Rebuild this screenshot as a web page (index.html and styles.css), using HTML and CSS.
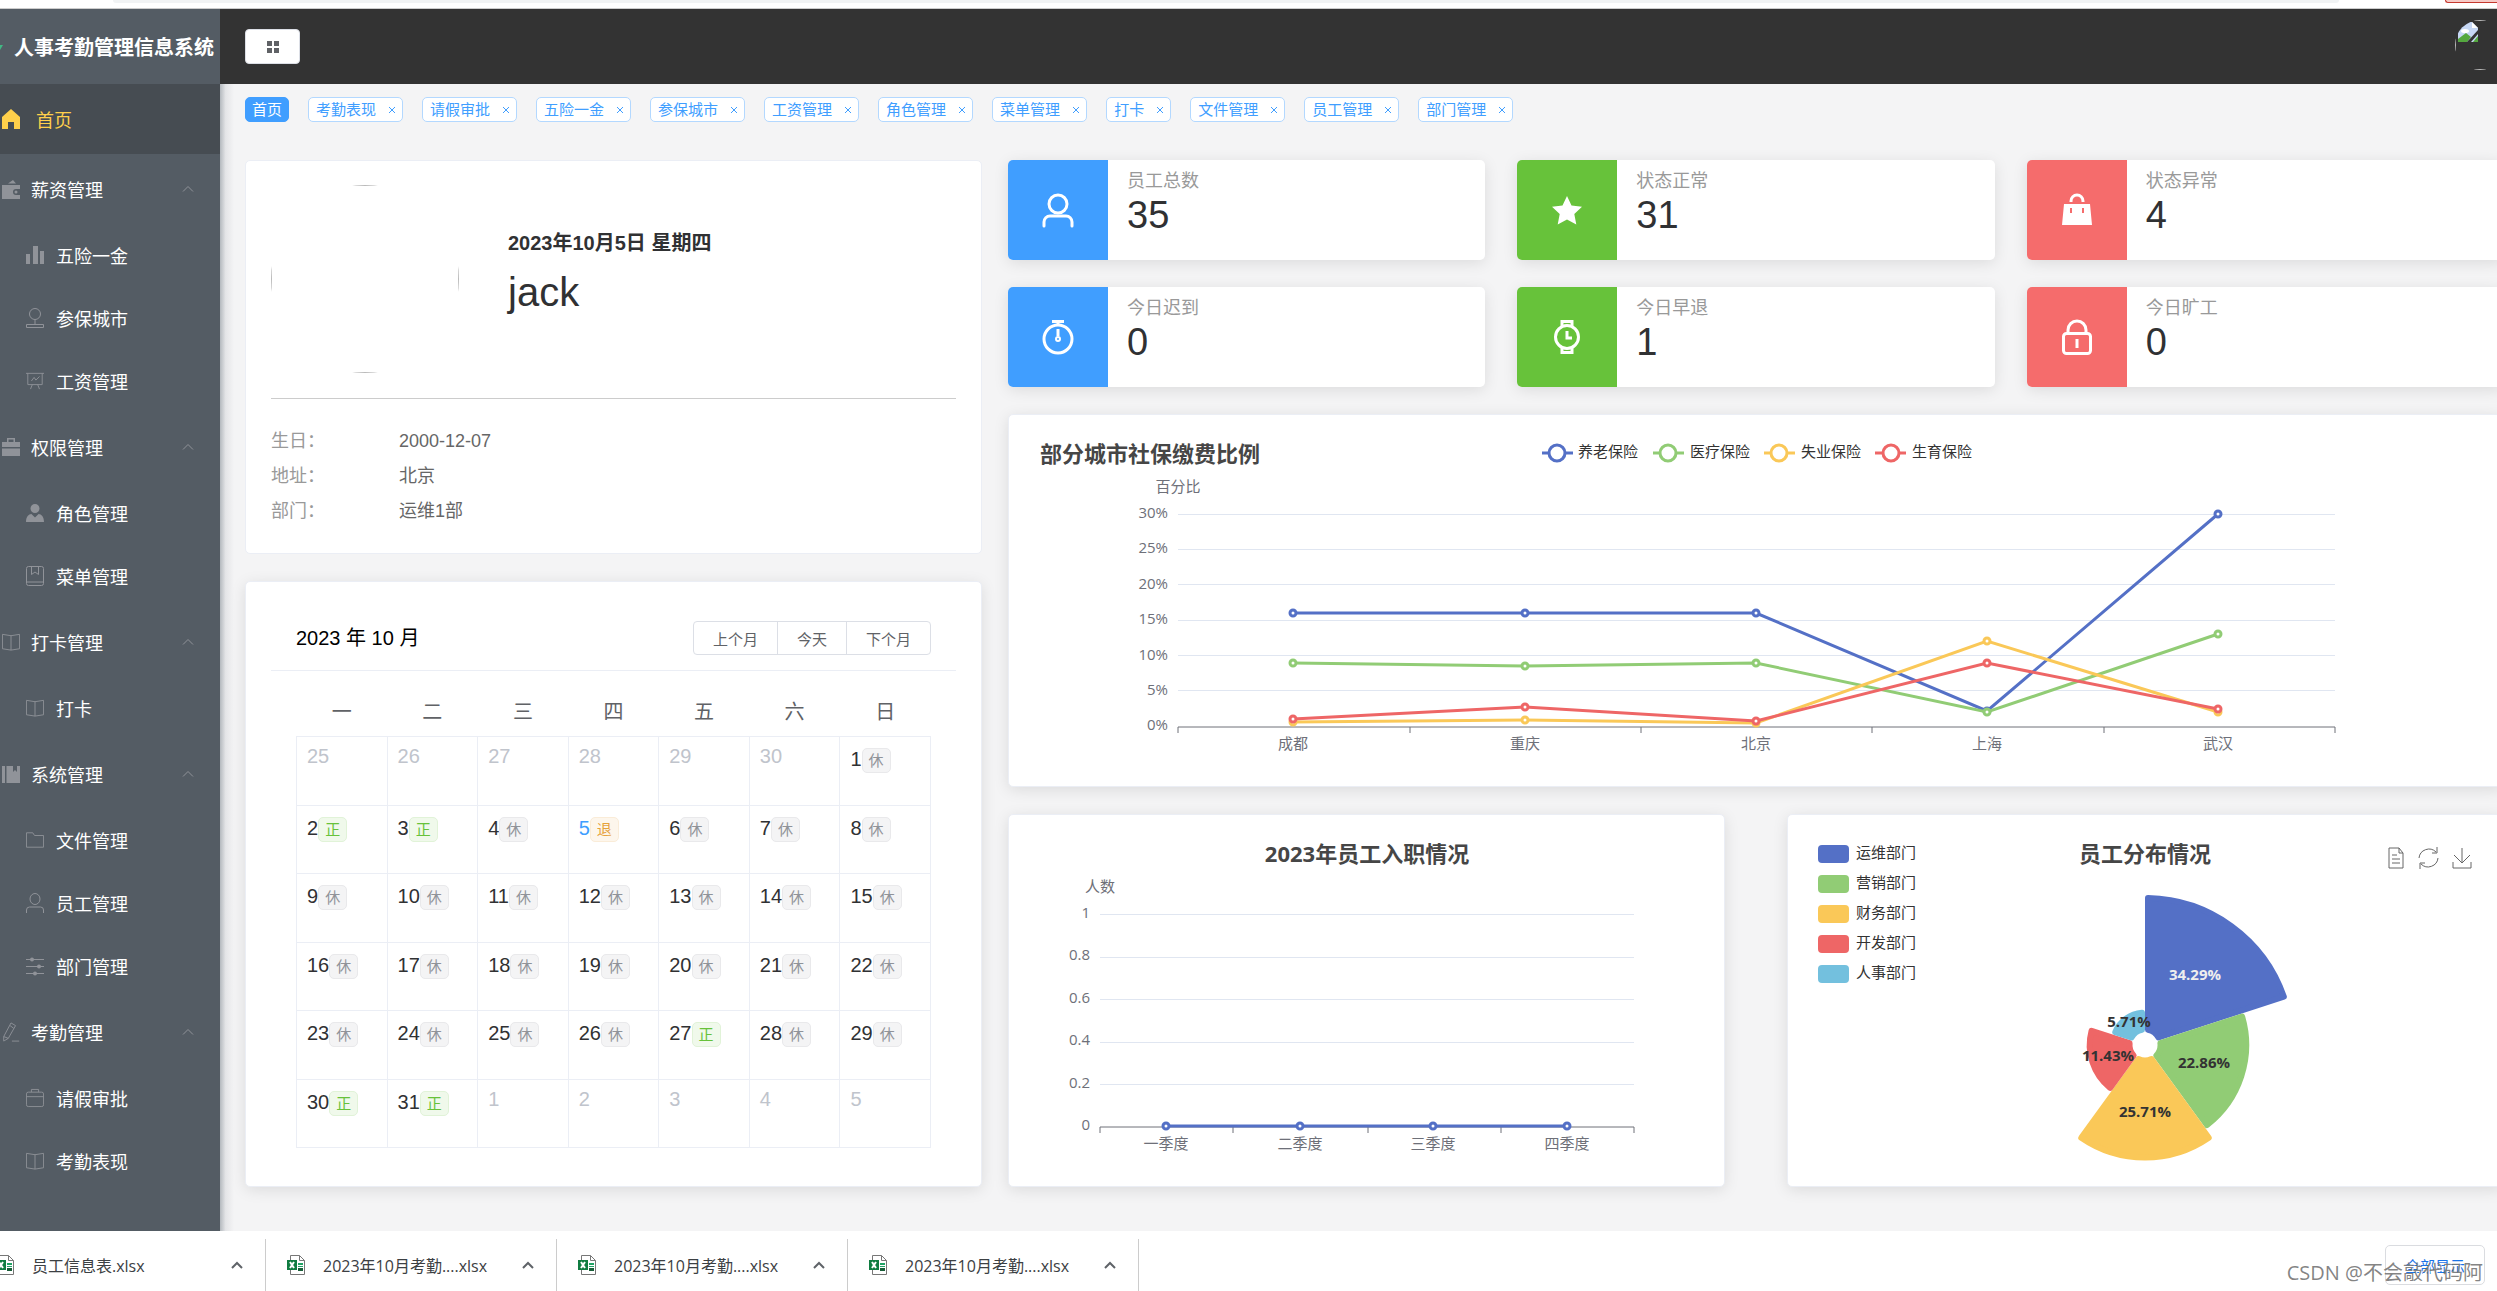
FILE: index.html
```html
<!DOCTYPE html>
<html lang="zh-CN">
<head>
<meta charset="utf-8">
<title>人事考勤管理信息系统</title>
<link rel="stylesheet" href="styles.css">
</head>
<body>
<svg class="sprite" aria-hidden="true">
  <symbol id="i-home" viewBox="0 0 18 20"><path fill="currentColor" d="M9 0 18 8v12h-6v-7H6v7H0V8z"/></symbol>
  <symbol id="i-wallet" viewBox="0 0 18 20"><path fill="currentColor" d="M6 4.500 11 1l3 3.500zM0 6h18v4h-4a3 3 0 0 0 0 6h4v4H0z"/><circle cx="14" cy="13" r="1.500" fill="currentColor"/></symbol>
  <symbol id="i-bars" viewBox="0 0 18 20"><path fill="currentColor" d="M0 9h4v10H0zM7 1h5v18H7zM14 6h4v13h-4z"/></symbol>
  <symbol id="i-place" viewBox="0 0 18 20"><g fill="none" stroke="currentColor"><circle cx="9" cy="6" r="5.500"/><path d="M9 11.500v5M.5 19.500v-3h17v3z"/></g></symbol>
  <symbol id="i-board" viewBox="0 0 20 20"><g fill="none" stroke="currentColor"><path d="M0 1.500h20M2 1.500v12.500h16V1.500M7 14l-2 5M13 14l2 5M6 10l3-4 2 3 4-4"/></g></symbol>
  <symbol id="i-case" viewBox="0 0 18 20"><path fill="currentColor" fill-rule="evenodd" d="M5 1h8v4h5v5H0V5h5zM6.500 2.500V5h5V2.500zM0 11.500h18V19H0z"/></symbol>
  <symbol id="i-user-solid" viewBox="0 0 20 20"><path fill="currentColor" d="M10 0a5 5 0 0 1 0 10 5 5 0 0 1 0-10M0 20c0-6 3-9 6-9l4 4 4-4c3 0 6 3 6 9z"/></symbol>
  <symbol id="i-note" viewBox="0 0 18 20"><g fill="none" stroke="currentColor"><rect x=".5" y=".5" width="17" height="19" rx="2"/><path d="M5.500.5v8L9 6l3.500 2.500v-8M.5 16h17"/></g></symbol>
  <symbol id="i-book" viewBox="0 0 20 20"><path fill="none" stroke="currentColor" d="M.5 1.500 10 3l9.500-1.500v16L10 19 .5 17.500zM10 3v16"/></symbol>
  <symbol id="i-manage" viewBox="0 0 18 20"><path fill="currentColor" d="M0 2h3v17H0zM4.500 2H11v6l2-2 2 2V2h3v17H4.500z"/></symbol>
  <symbol id="i-folder" viewBox="0 0 20 20"><path fill="none" stroke="currentColor" d="M.5 2h7l2 3h10v13H.5z"/></symbol>
  <symbol id="i-user" viewBox="0 0 18 20"><g fill="none" stroke="currentColor"><ellipse cx="9" cy="6" rx="5" ry="5.500"/><path d="M.5 20v-3a3 3 0 0 1 3-3h11a3 3 0 0 1 3 3v3"/></g></symbol>
  <symbol id="i-sliders" viewBox="0 0 18 20"><path fill="none" stroke="currentColor" d="M0 3.500h18M0 10.500h18M0 17.500h18"/><g fill="currentColor"><circle cx="6" cy="3.500" r="2"/><circle cx="13" cy="10.500" r="2"/><circle cx="9" cy="17.500" r="2"/></g></symbol>
  <symbol id="i-edit" viewBox="0 0 18 22"><g fill="none" stroke="currentColor"><path d="M1 16 9 1l5 3-8 14-5 3zM8 4l4 3M1 16l5 2M10 21h8"/></g></symbol>
  <symbol id="i-bag" viewBox="0 0 20 20"><g fill="none" stroke="currentColor"><rect x=".5" y="3.500" width="19" height="16" rx="2"/><path d="M.5 8.500h19M6 3.500v-3h8v3"/></g></symbol>
  <symbol id="i-up" viewBox="0 0 12 8"><path fill="none" stroke="currentColor" d="M1 6.500 6 1.500l5 5"/></symbol>
  <symbol id="i-chev" viewBox="0 0 12 8"><path fill="none" stroke="currentColor" stroke-width="2" d="M1 7l5-5 5 5"/></symbol>
  <symbol id="i-x" viewBox="0 0 8 8"><path fill="none" stroke="currentColor" d="M1 1l6 6M7 1 1 7"/></symbol>
  <symbol id="i-xls" viewBox="0 0 18 20"><path fill="#fff" stroke="#777" d="M3.500.5h9l5 5v14h-14z"/><path fill="none" stroke="#777" d="M12.500.5v5h5"/><path fill="#21a366" d="M11 8h5v2h-5zM11 11h5v1h-5z"/><path fill="#185c37" d="M11 13h5v3h-5z"/><path fill="#107c41" d="M0 5h10v10H0z"/><path stroke="#fff" stroke-width="2" d="M3 7l4 6M7 7l-4 6"/></symbol>
</svg>

<div class="page">
  <div class="browser-top"><div class="address"></div><div class="update"></div></div>
  <div class="app">
    <aside class="sidebar">
      <div class="brand"><svg viewBox="0 0 4 8" aria-hidden="true"><path fill="#41b883" d="M0 2h3L0 7z"/></svg><h1>人事考勤管理信息系统</h1></div>
      <nav>
        <a class="home" href="#"><svg><use href="#i-home"/></svg>首页</a>
        <section>
          <button class="group"><svg><use href="#i-wallet"/></svg>薪资管理<svg class="arrow"><use href="#i-up"/></svg></button>
          <div class="items">
            <a href="#"><svg><use href="#i-bars"/></svg>五险一金</a>
            <a href="#"><svg><use href="#i-place"/></svg>参保城市</a>
            <a href="#"><svg><use href="#i-board"/></svg>工资管理</a>
          </div>
        </section>
        <section>
          <button class="group"><svg><use href="#i-case"/></svg>权限管理<svg class="arrow"><use href="#i-up"/></svg></button>
          <div class="items">
            <a href="#"><svg><use href="#i-user-solid"/></svg>角色管理</a>
            <a href="#"><svg><use href="#i-note"/></svg>菜单管理</a>
          </div>
        </section>
        <section>
          <button class="group"><svg><use href="#i-book"/></svg>打卡管理<svg class="arrow"><use href="#i-up"/></svg></button>
          <div class="items">
            <a href="#"><svg><use href="#i-book"/></svg>打卡</a>
          </div>
        </section>
        <section>
          <button class="group"><svg><use href="#i-manage"/></svg>系统管理<svg class="arrow"><use href="#i-up"/></svg></button>
          <div class="items">
            <a href="#"><svg><use href="#i-folder"/></svg>文件管理</a>
            <a href="#"><svg><use href="#i-user"/></svg>员工管理</a>
            <a href="#"><svg><use href="#i-sliders"/></svg>部门管理</a>
          </div>
        </section>
        <section>
          <button class="group"><svg><use href="#i-edit"/></svg>考勤管理<svg class="arrow"><use href="#i-up"/></svg></button>
          <div class="items">
            <a href="#"><svg><use href="#i-bag"/></svg>请假审批</a>
            <a href="#"><svg><use href="#i-book"/></svg>考勤表现</a>
          </div>
        </section>
      </nav>
    </aside>

    <div class="main">
      <header class="topbar">
        <button class="toggle" aria-label="折叠菜单"><svg viewBox="0 0 12 12"><path fill="#606266" d="M0 0h5v5H0zM7 0h5v5H7zM0 7h5v5H0zM7 7h5v5H7z"/></svg></button>
        <div class="avatar small"><svg viewBox="0 0 20 20"><path fill="#c6d7f5" d="M0 0h14l6 6v14H0z"/><path fill="#fff" d="M14 0v6h6z"/><ellipse cx="7" cy="9" rx="4" ry="2" fill="#fff"/><path fill="#54a83e" d="M0 20v-3l8-6 5 4-4 5z"/><path fill="#54a83e" d="M15 20l5-6v6z"/><path fill="#333" d="M9 20 20 8v4l-7 8z"/></svg></div>
      </header>

      <div class="tags">
        <span class="tag active"><a href="#">首页</a></span>
        <span class="tag"><a href="#">考勤表现</a><button aria-label="关闭"><svg><use href="#i-x"/></svg></button></span>
        <span class="tag"><a href="#">请假审批</a><button aria-label="关闭"><svg><use href="#i-x"/></svg></button></span>
        <span class="tag"><a href="#">五险一金</a><button aria-label="关闭"><svg><use href="#i-x"/></svg></button></span>
        <span class="tag"><a href="#">参保城市</a><button aria-label="关闭"><svg><use href="#i-x"/></svg></button></span>
        <span class="tag"><a href="#">工资管理</a><button aria-label="关闭"><svg><use href="#i-x"/></svg></button></span>
        <span class="tag"><a href="#">角色管理</a><button aria-label="关闭"><svg><use href="#i-x"/></svg></button></span>
        <span class="tag"><a href="#">菜单管理</a><button aria-label="关闭"><svg><use href="#i-x"/></svg></button></span>
        <span class="tag"><a href="#">打卡</a><button aria-label="关闭"><svg><use href="#i-x"/></svg></button></span>
        <span class="tag"><a href="#">文件管理</a><button aria-label="关闭"><svg><use href="#i-x"/></svg></button></span>
        <span class="tag"><a href="#">员工管理</a><button aria-label="关闭"><svg><use href="#i-x"/></svg></button></span>
        <span class="tag"><a href="#">部门管理</a><button aria-label="关闭"><svg><use href="#i-x"/></svg></button></span>
      </div>

      <div class="dashboard">
        <div class="column">
          <section class="card flat profile">
            <div class="who">
              <div class="avatar"></div>
              <div class="greeting">
                <p class="date">2023年10月5日 星期四</p>
                <p class="name">jack</p>
              </div>
            </div>
            <dl>
              <dt>生日：</dt><dd>2000-12-07</dd>
              <dt>地址：</dt><dd>北京</dd>
              <dt>部门：</dt><dd>运维1部</dd>
            </dl>
          </section>

          <section class="card calendar">
            <header>
              <h2>2023 年 10 月</h2>
              <div class="buttons"><button>上个月</button><button>今天</button><button>下个月</button></div>
            </header>
            <table>
              <thead><tr><th>一</th><th>二</th><th>三</th><th>四</th><th>五</th><th>六</th><th>日</th></tr></thead>
              <tbody>
                <tr><td class="out">25</td><td class="out">26</td><td class="out">27</td><td class="out">28</td><td class="out">29</td><td class="out">30</td><td>1<i>休</i></td></tr>
                <tr><td>2<i class="ok">正</i></td><td>3<i class="ok">正</i></td><td>4<i>休</i></td><td class="today">5<i class="warn">退</i></td><td>6<i>休</i></td><td>7<i>休</i></td><td>8<i>休</i></td></tr>
                <tr><td>9<i>休</i></td><td>10<i>休</i></td><td>11<i>休</i></td><td>12<i>休</i></td><td>13<i>休</i></td><td>14<i>休</i></td><td>15<i>休</i></td></tr>
                <tr><td>16<i>休</i></td><td>17<i>休</i></td><td>18<i>休</i></td><td>19<i>休</i></td><td>20<i>休</i></td><td>21<i>休</i></td><td>22<i>休</i></td></tr>
                <tr><td>23<i>休</i></td><td>24<i>休</i></td><td>25<i>休</i></td><td>26<i>休</i></td><td>27<i class="ok">正</i></td><td>28<i>休</i></td><td>29<i>休</i></td></tr>
                <tr><td>30<i class="ok">正</i></td><td>31<i class="ok">正</i></td><td class="out">1</td><td class="out">2</td><td class="out">3</td><td class="out">4</td><td class="out">5</td></tr>
              </tbody>
            </table>
          </section>
        </div>

        <div class="column">
          <div class="stats">
            <div class="card stat blue"><div class="icon"><svg viewBox="0 0 32 36"><g fill="none" stroke="#fff" stroke-width="3"><circle cx="16" cy="12" r="9"/><path stroke-linecap="round" d="M2 34v-4a6 6 0 0 1 6-6h16a6 6 0 0 1 6 6v4"/></g></svg></div><div><p>员工总数</p><strong>35</strong></div></div>
            <div class="card stat green"><div class="icon"><svg viewBox="0 0 32 36"><path fill="#fff" d="M16 4l4.500 9.500 10.500 1.200-7.700 7.200 2 10.600L16 27.500l-9.300 5 2-10.600L1 14.700l10.500-1.200z"/></svg></div><div><p>状态正常</p><strong>31</strong></div></div>
            <div class="card stat red"><div class="icon"><svg viewBox="0 0 32 36"><path fill="none" stroke="#fff" stroke-width="3" d="M10 10V9a6 6 0 0 1 12 0v1"/><path fill="#fff" fill-rule="evenodd" d="M3 12h26l2 21H1zM9 16v5h2v-5zM21 16v5h2v-5z"/></svg></div><div><p>状态异常</p><strong>4</strong></div></div>
            <div class="card stat blue"><div class="icon"><svg viewBox="0 0 32 36"><g fill="none" stroke="#fff" stroke-width="3"><circle cx="16" cy="20" r="14"/><path d="M16 6V3M10 2.500h12M16 10v7"/><circle cx="16" cy="20" r="2" stroke-width="2"/></g></svg></div><div><p>今日迟到</p><strong>0</strong></div></div>
            <div class="card stat green"><div class="icon"><svg viewBox="0 0 32 36"><g fill="none" stroke="#fff" stroke-width="3"><circle cx="16" cy="18" r="11.500"/><path d="M11 7V2.500h10V7M11 29v4.500h10V29M16 12v7h5"/></g></svg></div><div><p>今日早退</p><strong>1</strong></div></div>
            <div class="card stat red"><div class="icon"><svg viewBox="0 0 32 36"><g fill="none" stroke="#fff" stroke-width="3"><rect x="2.500" y="14.500" width="27" height="20" rx="3"/><path d="M7 14v-3a9 9 0 0 1 18 0v3M16 20v9"/></g></svg></div><div><p>今日旷工</p><strong>0</strong></div></div>
          </div>

          <section class="card chart">
            <svg viewBox="1 1 1494 371" role="img" aria-label="部分城市社保缴费比例">
              <text class="title" x="32" y="48">部分城市社保缴费比例</text>
              <g class="legend">
                <g stroke="#5470c6"><path d="M534 39h31"/><circle cx="549" cy="39" r="8"/></g><text x="570" y="43">养老保险</text>
                <g stroke="#91cc75"><path d="M645 39h31"/><circle cx="660" cy="39" r="8"/></g><text x="682" y="43">医疗保险</text>
                <g stroke="#fac858"><path d="M756 39h31"/><circle cx="771" cy="39" r="8"/></g><text x="793" y="43">失业保险</text>
                <g stroke="#ee6666"><path d="M867 39h31"/><circle cx="883" cy="39" r="8"/></g><text x="904" y="43">生育保险</text>
              </g>
              <path class="grid" d="M170 100.500h1157M170 135.500h1157M170 170.500h1157M170 206.500h1157M170 241.500h1157M170 276.500h1157"/>
              <path class="axis" d="M170 313h1157M170 313v6M402 313v6M633 313v6M864 313v6M1096 313v6M1327 313v6"/>
              <g class="labels end">
                <text x="160" y="104">30%</text><text x="160" y="139">25%</text><text x="160" y="175">20%</text><text x="160" y="210">15%</text><text x="160" y="246">10%</text><text x="160" y="281">5%</text><text x="160" y="316">0%</text>
              </g>
              <g class="labels mid">
                <text x="170" y="78">百分比</text>
                <text x="285" y="335">成都</text><text x="517" y="335">重庆</text><text x="748" y="335">北京</text><text x="979" y="335">上海</text><text x="1210" y="335">武汉</text>
              </g>
              <g class="series" stroke="#5470c6"><path d="M285 199H748L979 297 1210 100"/><circle cx="285" cy="199" r="3"/><circle cx="517" cy="199" r="3"/><circle cx="748" cy="199" r="3"/><circle cx="979" cy="297" r="3"/><circle cx="1210" cy="100" r="3"/></g>
              <g class="series" stroke="#91cc75"><path d="M285 249 517 252 748 249 979 298 1210 220"/><circle cx="285" cy="249" r="3"/><circle cx="517" cy="252" r="3"/><circle cx="748" cy="249" r="3"/><circle cx="979" cy="298" r="3"/><circle cx="1210" cy="220" r="3"/></g>
              <g class="series" stroke="#fac858"><path d="M285 308 517 306 748 309 979 227 1210 298"/><circle cx="285" cy="308" r="3"/><circle cx="517" cy="306" r="3"/><circle cx="748" cy="309" r="3"/><circle cx="979" cy="227" r="3"/><circle cx="1210" cy="298" r="3"/></g>
              <g class="series" stroke="#ee6666"><path d="M285 305 517 293 748 307 979 249 1210 295"/><circle cx="285" cy="305" r="3"/><circle cx="517" cy="293" r="3"/><circle cx="748" cy="307" r="3"/><circle cx="979" cy="249" r="3"/><circle cx="1210" cy="295" r="3"/></g>
            </svg>
          </section>

          <div class="pair">
            <section class="card chart">
              <svg viewBox="1 1 715 371" role="img" aria-label="2023年员工入职情况">
                <text class="title mid" x="359" y="48">2023年员工入职情况</text>
                <path class="grid" d="M92 100.500h534M92 143.500h534M92 185.500h534M92 228.500h534M92 270.500h534"/>
                <path class="axis" d="M92 313h534M92 313v6M225 313v6M360 313v6M493 313v6M626 313v6"/>
                <g class="labels end">
                  <text x="82" y="104">1</text><text x="82" y="146">0.8</text><text x="82" y="189">0.6</text><text x="82" y="231">0.4</text><text x="82" y="274">0.2</text><text x="82" y="316">0</text>
                </g>
                <g class="labels mid">
                  <text x="92" y="78">人数</text>
                  <text x="158" y="335">一季度</text><text x="292" y="335">二季度</text><text x="425" y="335">三季度</text><text x="559" y="335">四季度</text>
                </g>
                <g class="series" stroke="#5470c6"><path d="M158 312H559"/><circle cx="158" cy="312" r="3"/><circle cx="292" cy="312" r="3"/><circle cx="425" cy="312" r="3"/><circle cx="559" cy="312" r="3"/></g>
              </svg>
            </section>

            <section class="card chart">
              <svg viewBox="1 1 715 371" role="img" aria-label="员工分布情况">
                <text class="title mid" x="358" y="48">员工分布情况</text>
                <g class="legend">
                  <rect x="31" y="31" width="31" height="18" rx="4" fill="#5470c6"/><text x="69" y="44">运维部门</text>
                  <rect x="31" y="61" width="31" height="18" rx="4" fill="#91cc75"/><text x="69" y="74">营销部门</text>
                  <rect x="31" y="91" width="31" height="18" rx="4" fill="#fac858"/><text x="69" y="104">财务部门</text>
                  <rect x="31" y="121" width="31" height="18" rx="4" fill="#ee6666"/><text x="69" y="134">开发部门</text>
                  <rect x="31" y="151" width="31" height="18" rx="4" fill="#73c0de"/><text x="69" y="164">人事部门</text>
                </g>
                <g class="tools">
                  <path d="M602 34h10l4 5v15h-14zM612 34v5h4M605 41h5M605 45h8M605 49h8"/>
                  <path d="M632 44a10 10 0 0 1 17-6M651 44a10 10 0 0 1-17 6M650 33v6h-5M633 55v-6h5"/>
                  <path d="M675 34v15M667 41l8 8 8-8M666 48v6h18v-6"/>
                </g>
                <g class="rose" transform="translate(358 231)">
                  <path fill="#5470c6" stroke="#5470c6" d="M3-15.210V-146.970A147 147 0 0 1 138.850-48.280L13.540-7.550A15.500 15.500 0 0 0 3-15.210z"/>
                  <path fill="#91cc75" stroke="#91cc75" transform="rotate(72)" d="M3-15.210V-101.160A101.200 101.200 0 0 1 95.280-34.110L13.540-7.550A15.500 15.500 0 0 0 3-15.210z"/>
                  <path fill="#fac858" stroke="#fac858" transform="rotate(144)" d="M3-15.210V-112.560A112.600 112.600 0 0 1 106.120-37.640L13.540-7.550A15.500 15.500 0 0 0 3-15.210z"/>
                  <path fill="#ee6666" stroke="#ee6666" transform="rotate(216)" d="M3-15.210V-55.220A55.300 55.300 0 0 1 51.590-19.920L13.540-7.550A15.500 15.500 0 0 0 3-15.210z"/>
                  <path fill="#73c0de" stroke="#73c0de" transform="rotate(288)" d="M3-15.210V-32.260A32.400 32.400 0 0 1 29.760-12.820L13.540-7.550A15.500 15.500 0 0 0 3-15.210z"/>
                </g>
                <g class="percent">
                  <text class="light" x="408" y="166">34.29%</text><text x="417" y="254">22.86%</text><text x="358" y="303">25.71%</text><text x="321" y="247">11.43%</text><text x="342" y="213">5.71%</text>
                </g>
              </svg>
            </section>
          </div>
        </div>
      </div>
    </div>
  </div>

  <footer class="downloads">
    <div class="file"><svg class="xls"><use href="#i-xls"/></svg><a href="#">员工信息表.xlsx</a><button aria-label="更多"><svg><use href="#i-chev"/></svg></button></div>
    <div class="file"><svg class="xls"><use href="#i-xls"/></svg><a href="#">2023年10月考勤....xlsx</a><button aria-label="更多"><svg><use href="#i-chev"/></svg></button></div>
    <div class="file"><svg class="xls"><use href="#i-xls"/></svg><a href="#">2023年10月考勤....xlsx</a><button aria-label="更多"><svg><use href="#i-chev"/></svg></button></div>
    <div class="file"><svg class="xls"><use href="#i-xls"/></svg><a href="#">2023年10月考勤....xlsx</a><button aria-label="更多"><svg><use href="#i-chev"/></svg></button></div>
    <button class="show-all">全部显示</button>
    <span class="watermark">CSDN @不会敲代码阿</span>
  </footer>
</div>
</body>
</html>
```

FILE: styles.css
```css
* { box-sizing: border-box; }

body {
  margin: 0;
  overflow: hidden;
  background: #f4f4f5;
  color: #303133;
  font-family: "Liberation Sans", "Noto Sans CJK SC", sans-serif;
  font-size: 18px;
}

button {
  padding: 0;
  border: 0;
  background: none;
  color: inherit;
  font: inherit;
}

a { color: inherit; text-decoration: none; }
p, h1, h2, dl, dd { margin: 0; }
.sprite { display: none; }

.page {
  display: flex;
  flex-direction: column;
  min-height: 100vh;
}

/* browser edge */
.browser-top {
  display: flex;
  gap: 106px;
  height: 9px;
  padding-left: 113px;
  border-bottom: 1px solid #ccc;
  background: #fff;
}
.address { flex: 1; height: 3px; border-radius: 0 0 8px 8px; background: #f1f3f4; }
.update {
  width: 52px;
  height: 3px;
  border: solid #c5392f;
  border-width: 0 0 1px 1px;
  border-radius: 0 0 0 6px;
  background: #f6c9c5;
}

.app { display: flex; flex: 1; }

/* sidebar */
.sidebar {
  position: relative;
  flex: none;
  width: 220px;
  background: #545c64;
  color: #fff;
}
.sidebar::after {
  content: "";
  position: absolute;
  top: 75px;
  bottom: 0;
  left: 100%;
  width: 14px;
  background: linear-gradient(to right, #b4b9be, #e4e5e7 40%, rgba(244, 244, 245, 0));
}
.brand {
  display: flex;
  align-items: center;
  gap: 10px;
  height: 75px;
}
.brand h1 { font-size: 20px; white-space: nowrap; }
.sidebar svg { flex: none; width: 18px; height: 20px; color: #909399; }
.sidebar .brand svg { width: 4px; height: 24px; }
.home, .group, .items a { display: flex; align-items: center; }
.home {
  height: 70px;
  gap: 16px;
  padding-left: 2px;
  background: #464c52;
  color: #ffd04b;
}
.sidebar .home svg { color: #ffd04b; }
.group {
  width: 100%;
  height: 70px;
  gap: 11px;
  padding: 0 26px 0 2px;
}
.sidebar .arrow { width: 12px; height: 8px; margin-left: auto; }
.items { display: grid; grid-auto-rows: 62px; gap: 1px; }
.items a { gap: 12px; padding-left: 26px; }

/* header */
.main { flex: 1; min-width: 0; overflow: hidden; }
.topbar {
  display: flex;
  align-items: center;
  justify-content: space-between;
  height: 75px;
  margin-right: -8px;
  padding-left: 25px;
  background: #333;
}
.toggle {
  display: grid;
  place-items: center;
  width: 55px;
  height: 35px;
  border: 1px solid #dcdfe6;
  border-radius: 4px;
  background: #fff;
}
.toggle svg { width: 12px; height: 12px; }
.avatar {
  display: flex;
  width: 188px;
  height: 188px;
  border-radius: 50%;
  overflow: hidden;
}
.avatar::before { content: ""; width: 100%; border: 1px solid #bbb; }
.avatar.small { width: 50px; height: 50px; margin-top: -4px; }
.avatar.small svg { flex: none; width: 20px; height: 20px; margin: 2px 0 0 -49px; }

/* page tags */
.tags { display: flex; gap: 19px; height: 76px; padding: 13px 0 0 25px; }
.tag {
  display: flex;
  align-items: center;
  height: 25px;
  padding: 0 2px 0 7px;
  border: 1px solid #b3d8ff;
  border-radius: 5px;
  background: #fff;
  color: #409eff;
  font-size: 15px;
  line-height: 23px;
  white-space: nowrap;
}
.tag.active { padding: 0 6px; border-color: #409eff; background: #409eff; color: #fff; }
.tag button { display: grid; place-items: center; width: 16px; height: 16px; margin-left: 8px; }
.tag svg { width: 8px; height: 8px; }

/* dashboard */
.dashboard {
  display: grid;
  grid-template-columns: 737fr 1496fr;
  gap: 26px;
  margin-right: -7px;
  padding: 0 0 44px 25px;
}
.column { display: flex; flex-direction: column; gap: 27px; min-width: 0; }
.card {
  border: 1px solid #ebeef5;
  border-radius: 5px;
  background: #fff;
  box-shadow: 0 3px 15px rgba(0, 0, 0, 0.1);
}
.card.flat { box-shadow: none; }

.profile { padding: 24px 25px; }
.who {
  display: flex;
  align-items: center;
  gap: 49px;
  padding-bottom: 25px;
  border-bottom: 1px solid #ccc;
}
.greeting { padding-bottom: 12px; }
.date { font-size: 20px; font-weight: bold; line-height: 30px; }
.name { margin-top: 8px; font-size: 40px; line-height: 52px; }
.profile dl {
  display: grid;
  grid-template-columns: 128px 1fr;
  padding-top: 25px;
  line-height: 35px;
}
.profile dt { color: #999; }
.profile dd { color: #666; }

.calendar { flex: 1; padding: 25px; }
.calendar header {
  display: flex;
  align-items: center;
  justify-content: space-between;
  padding: 14px 25px 15px;
  border-bottom: 1px solid #ebeef5;
}
.calendar h2 { color: #000; font-size: 20px; font-weight: normal; line-height: 34px; }
.buttons { display: flex; border: 1px solid #dcdfe6; border-radius: 4px; }
.buttons button { height: 32px; padding: 0 19px; color: #606266; font-size: 15px; }
.buttons button + button { border-left: 1px solid #dcdfe6; }
.calendar table {
  width: calc(100% - 50px);
  margin: 15px 25px 0;
  border-collapse: collapse;
  table-layout: fixed;
  font-size: 20px;
}
.calendar th { height: 50px; padding: 0; color: #606266; font-weight: normal; }
.calendar td {
  height: 68px;
  padding: 10px;
  border: 1px solid #ebeef5;
  line-height: 25px;
  vertical-align: top;
}
.calendar tbody tr:nth-child(odd) td { height: 69px; }
.calendar td.out { padding-top: 7px; color: #c0c4cc; }
.calendar td.today { color: #409eff; }
.calendar i {
  display: inline-block;
  height: 25px;
  padding: 0 6px;
  border: 1px solid #e9e9eb;
  border-radius: 5px;
  background: #f4f4f5;
  color: #909399;
  font-size: 15px;
  font-style: normal;
  line-height: 23px;
}
.calendar i.ok { border-color: #e1f3d8; background: #f0f9eb; color: #67c23a; }
.calendar i.warn { border-color: #faecd8; background: #fdf6ec; color: #e6a23c; }

.stats { display: grid; grid-template-columns: repeat(3, 1fr); gap: 27px 32px; }
.stat { display: flex; gap: 19px; height: 100px; border: 0; overflow: hidden; }
.stat .icon { display: grid; place-items: center; width: 100px; }
.stat .icon svg { width: 32px; height: 36px; }
.stat p { padding-top: 8px; color: #999; line-height: 26px; }
.stat strong { font-size: 38px; font-weight: normal; line-height: 42px; }
.blue .icon { background: #409eff; }
.green .icon { background: #67c23a; }
.red .icon { background: #f56c6c; }

/* charts */
.chart { min-width: 0; }
.chart svg {
  display: block;
  width: 100%;
  height: 371px;
  font-family: "Open Sans", "Noto Sans CJK SC", sans-serif;
  font-size: 15px;
}
.pair { display: grid; grid-template-columns: 1fr 1fr; gap: 62px; }
.title { fill: #464646; font-size: 22px; font-weight: bold; }
.mid { text-anchor: middle; }
.end { text-anchor: end; }
.labels { fill: #6e7079; }
.legend text { fill: #333; stroke: none; }
.legend path, .legend circle { fill: #fff; stroke-width: 3; }
.grid { stroke: #e0e6f1; }
.axis { fill: none; stroke: #6e7079; }
.series path { fill: none; stroke-width: 3; }
.series circle { fill: #fff; stroke-width: 3; }
.tools { fill: none; stroke: #666; }
.rose path { stroke-width: 6; stroke-linejoin: round; }
.percent { fill: #333; font-weight: bold; text-anchor: middle; }
.percent .light { fill: #eee; }

/* downloads */
.downloads {
  position: relative;
  display: flex;
  height: 60px;
  background: #fff;
  color: #3c4043;
  font-family: "Open Sans", "Noto Sans CJK SC", sans-serif;
  font-size: 16px;
}
.file {
  display: flex;
  align-items: center;
  width: 291px;
  height: 52px;
  margin-top: 8px;
  padding: 0 22px 0 21px;
  border-right: 1px solid #ccc;
}
.file:first-child { margin-left: -25px; }
.file .xls { flex: none; width: 18px; height: 20px; margin-right: 18px; }
.file button { margin-left: auto; color: #5f6368; }
.file button svg { display: block; width: 12px; height: 8px; }
.show-all {
  width: 100px;
  height: 40px;
  margin: 14px 12px 0 auto;
  border: 1px solid #dadce0;
  border-radius: 5px;
  color: #1a73e8;
  font-size: 15px;
}
.watermark {
  position: absolute;
  right: 14px;
  bottom: 4px;
  color: rgba(110, 110, 110, 0.85);
  font-size: 20px;
  line-height: 28px;
  text-shadow: 1px 1px 0 #fff;
}
```
